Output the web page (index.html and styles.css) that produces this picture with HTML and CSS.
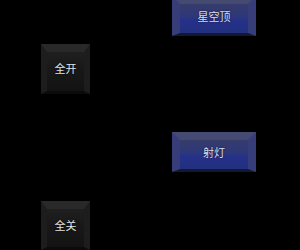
FILE: index.html
```html
<!DOCTYPE html>
<html lang="zh">
<head>
  <meta charset="UTF-8">
  <title>灯光控制</title>
  <link rel="stylesheet" href="styles.css">
</head>
<body>

  <div class="panel">
    <div class="col col-left">
      <button class="btn btn-dark btn-open">全开</button>
      <button class="btn btn-dark btn-close">全关</button>
    </div>
    <div class="col col-right">
      <button class="btn btn-blue btn-sky">星空顶</button>
      <button class="btn btn-blue btn-spot">射灯</button>
    </div>
  </div>

</body>
</html>
```

FILE: styles.css
```css
body {
  margin: 0;
  padding: 0;
  background: #000;
  font-family: "Noto Sans CJK SC", "Noto Sans", sans-serif;
  overflow: hidden;
}
.panel {
  width: 300px;
  height: 250px;
  display: flex;
  overflow: hidden;
}
.col {
  display: flex;
  flex-direction: column;
}
.col-left {
  margin-left: 41px;
  width: 49px;
}
.col-right {
  margin-left: 82px;
  width: 84px;
}
.btn {
  box-sizing: border-box;
  width: 100%;
  padding: 0 0 6px 0;
  font-family: inherit;
  font-size: 11px;
  color: #e4e4e8;
  border-style: solid;
  text-shadow: 0 0 2px rgba(0,0,0,0.7);
}
.btn-dark {
  height: 51px;
  border-width: 8px 6px 3px 6px;
  background: linear-gradient(#1f1f1f, #181818 45%, #131313);
  border-color: #292929 #1d1d1d #0b0b0b #1d1d1d;
}
.btn-blue {
  height: 40px;
  border-width: 8px 8px 3px 8px;
  background: linear-gradient(#363c6a, #2e377a 45%, #25318a 55%, #22307f);
  border-color: #454a72 #363d78 #141831 #363d78;
  color: #d8ddf0;
}
.btn-open {
  margin-top: 44px;
}
.btn-close {
  margin-top: 107px;
}
.btn-sky {
  margin-top: -4px;
}
.btn-spot {
  margin-top: 96px;
}
```
